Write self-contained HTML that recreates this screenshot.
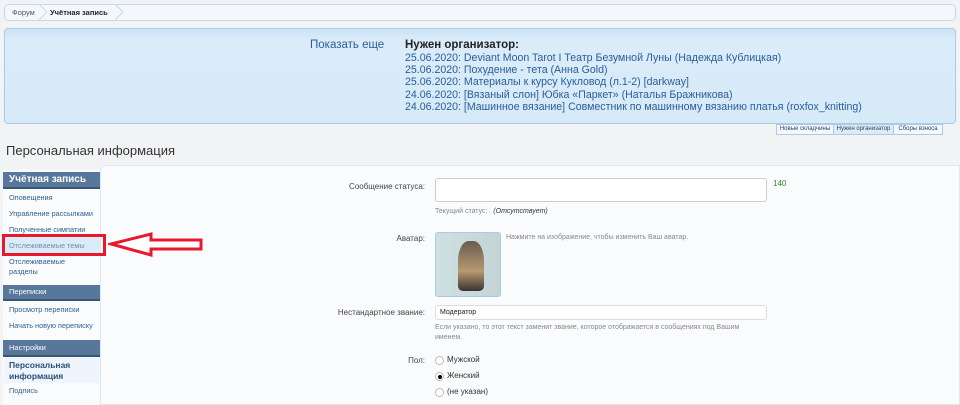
<!DOCTYPE html>
<html><head><meta charset="utf-8"><style>
*{box-sizing:border-box;margin:0;padding:0}
body{width:960px;height:401px;overflow:hidden;background:#f2f3f5;font-family:"Liberation Sans",sans-serif;position:relative;color:#333}
.a{position:absolute}
.crumb{left:4px;top:4px;width:952px;height:17px;border:1px solid #c5d8ec;border-radius:5px;background:#f4f8fc;font-size:7.5px}
.notice{left:4px;top:28px;width:952px;height:96px;border:1px solid #a9cbe8;border-radius:4px;background:linear-gradient(#cbe3f5,#dbecf9 12px,#d6eaf8);font-size:10.6px;line-height:12.2px}
.tab{top:124px;height:11px;border:1px solid #a9cbe8;background:#f4f8fc;font-size:6px;line-height:9px;color:#345;text-align:center}
.side{left:3px;width:97px;font-size:7.5px;color:#2a5a8c}
.hd{background:#57779b;color:#fff;border-bottom:2px solid #3b5672;padding-left:6px}
.it{position:absolute;left:9px;font-size:7.3px;color:#2f5f8f}
.lbl{position:absolute;right:535px;font-size:8px;color:#444;text-align:right}
.sm{font-size:7px;color:#888}
.radio{position:absolute;left:435px;width:9px;height:9px;border:1px solid #bbb;border-radius:50%;background:#fff}
</style></head><body>
<div class="a crumb"><span class="a" style="left:7px;top:3px;color:#555">Форум</span><span class="a" style="left:45px;top:3px;font-weight:bold;color:#223">Учётная запись</span>
<svg class="a" style="left:30px;top:-1px" width="90" height="17"><path d="M4 0 L12 8 L4 16 M80 0 L88 8 L80 16" fill="none" stroke="#c5d8ec"/></svg></div>
<div class="a notice">
<div class="a" style="left:305px;top:10px;color:#2a5d9a;font-size:11.5px">Показать еще</div>
<div class="a" style="left:400px;top:10px;font-weight:bold;font-size:11.5px;color:#222">Нужен организатор:</div>
<div class="a" style="left:400px;top:23px;color:#2a5d9a;white-space:nowrap">25.06.2020: Deviant Moon Tarot I Театр Безумной Луны (Надежда Кублицкая)<br>25.06.2020: Похудение - тета (Анна Gold)<br>25.06.2020: Материалы к курсу Кукловод (л.1-2) [darkway]<br>24.06.2020: [Вязаный слон] Юбка «Паркет» (Наталья Бражникова)<br>24.06.2020: [Машинное вязание] Совместник по машинному вязанию платья (roxfox_knitting)</div>
</div>
<div class="a tab" style="left:776px;width:58px">Новые складчины</div>
<div class="a tab" style="left:833px;width:61px;background:#dcebf8">Нужен организатор</div>
<div class="a tab" style="left:893px;width:50px">Сборы взноса</div>
<div class="a" style="left:6px;top:143px;font-size:13px;color:#333">Персональная информация</div>
<div class="a" style="left:100px;top:165px;width:860px;height:240px;background:#fafbfd;border:1px solid #dde8f2;border-radius:6px 0 0 0"></div>
<div class="a" style="left:3px;top:170px;width:97px;height:235px;background:#fafbfd"></div>
<div class="a side hd" style="top:172px;height:17px;font-size:10px;font-weight:bold;line-height:15px">Учётная запись</div>
<div class="it" style="top:193px">Оповещения</div>
<div class="it" style="top:209px">Управление рассылками</div>
<div class="it" style="top:225px">Полученные симпатии</div>
<div class="a" style="left:4px;top:236px;width:96px;height:17px;background:#dbecf9"></div>
<div class="it" style="top:241px;color:#6a8fb5">Отслеживаемые темы</div>
<div class="it" style="top:257px;line-height:10px">Отслеживаемые<br>разделы</div>
<div class="a side hd" style="top:285px;height:16px;line-height:14px">Переписки</div>
<div class="it" style="top:305px">Просмотр переписки</div>
<div class="it" style="top:321px">Начать новую переписку</div>
<div class="a side hd" style="top:340px;height:17px;line-height:15px">Настройки</div>
<div class="a" style="left:4px;top:357px;width:96px;height:26px;background:#eef5fc"></div>
<div class="it" style="top:360px;font-size:8.5px;font-weight:bold;line-height:11px;color:#2a4f78">Персональная<br>информация</div>
<div class="it" style="top:386px">Подпись</div>
<div class="a" style="left:2px;top:234px;width:104px;height:22px;border:3px solid #e8192c"></div>
<svg class="a" style="left:108px;top:232px" width="96" height="26"><path d="M3 12 L43 2 L43 8 L93 8 L93 17 L43 17 L43 23 Z" fill="#fff" stroke="#e8192c" stroke-width="3"/></svg>
<div class="lbl" style="top:182px">Сообщение статуса:</div>
<div class="a" style="left:435px;top:178px;width:332px;height:24px;border:1px solid #ccc;border-radius:3px;background:#fff"></div>
<div class="a" style="left:773px;top:179px;font-size:8px;color:#2a8a2a">140</div>
<div class="a sm" style="left:435px;top:208px">Текущий статус: &nbsp; <i style="color:#333">(Отсутствует)</i></div>
<div class="lbl" style="top:234px">Аватар:</div>
<div class="a" style="left:435px;top:232px;width:66px;height:65px;border:1px solid #a9cbe8;border-radius:3px;background:linear-gradient(90deg,#cfe0e2,#c4d4d6)"><div class="a" style="left:22px;top:8px;width:26px;height:50px;background:linear-gradient(#6a5a50,#b79a70 60%,#3b3230);border-radius:40% 40% 5px 5px"></div></div>
<div class="a sm" style="left:506px;top:234px">Нажмите на изображение, чтобы изменить Ваш аватар.</div>
<div class="lbl" style="top:308px">Нестандартное звание:</div>
<div class="a" style="left:435px;top:305px;width:332px;height:15px;border:1px solid #ddd;border-radius:3px;background:#fff;font-size:7px;padding:3px 4px;color:#222">Модератор</div>
<div class="a sm" style="left:435px;top:323px;line-height:10px">Если указано, то этот текст заменит звание, которое отображается в сообщениях под Вашим<br>именем.</div>
<div class="lbl" style="top:356px">Пол:</div>
<div class="radio" style="top:356px"></div><div class="a" style="left:447px;top:355px;font-size:8px">Мужской</div>
<div class="radio" style="top:372px"><div class="a" style="left:2px;top:2px;width:4px;height:4px;border-radius:50%;background:#000"></div></div><div class="a" style="left:447px;top:371px;font-size:8px">Женский</div>
<div class="radio" style="top:388px"></div><div class="a" style="left:447px;top:387px;font-size:8px">(не указан)</div>
</body></html>
